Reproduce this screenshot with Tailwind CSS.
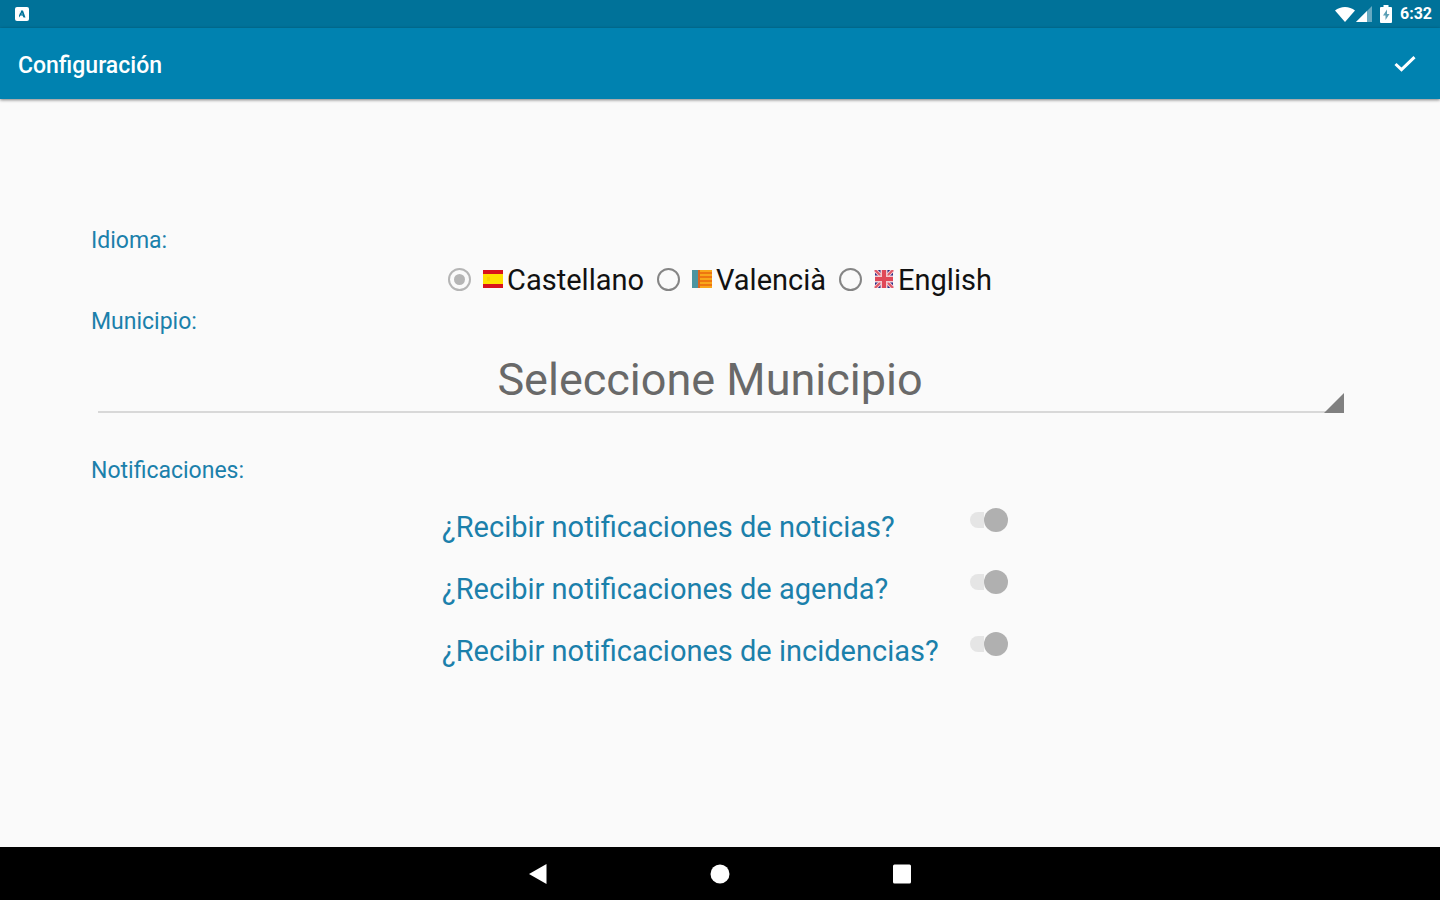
<!DOCTYPE html>
<html lang="es">
<head>
<meta charset="utf-8">
<meta name="viewport" content="width=device-width, initial-scale=1">
<title>Configuración</title>
<script src="https://cdn.jsdelivr.net/npm/@tailwindcss/browser@4"></script>
</head>
<body class="flex min-h-screen flex-col bg-[#fafafa] font-['Roboto',sans-serif] text-[#1b80ab]">
  <!-- Status bar -->
  <div class="flex h-7 items-center justify-between bg-[#007299] pr-2 pl-[15px] text-white">
    <svg class="size-[14px]" viewBox="0 0 14 14" aria-hidden="true"><rect width="14" height="14" rx="2" fill="#fff"/><path d="M4 10.500V8.500L6 3.500h2l2.500 7H8.500L7.500 8.500H5.500Z" fill="#007299"/><path d="M4.500 4h1.500v1.500H4.500zM6.500 6.500h1v1h-1z" fill="#dceef4"/></svg>
    <div class="flex items-center">
      <svg class="h-4 w-5" viewBox="0 0 20 16" aria-hidden="true"><path d="M0 4.500C5.500-.2 14.500-.2 20 4.500L10 16Z" fill="#fff"/></svg>
      <svg class="ml-px h-4 w-4" viewBox="0 0 16 16" aria-hidden="true"><path d="M0 16 16 0V16Z" fill="#66aac2"/><path d="M0 16 11 5V16Z" fill="#fff"/></svg>
      <svg class="ml-2 h-[18px] w-3" viewBox="0 0 12 18" aria-hidden="true"><path d="M3.500 0h5v2H11a1 1 0 0 1 1 1v14a1 1 0 0 1-1 1H1a1 1 0 0 1-1-1V3a1 1 0 0 1 1-1h2.500Z" fill="#fff"/><path d="M7 4.500 3 10.500h2.500V15l4-6H7Z" fill="#5c9fb5"/></svg>
      <span class="ml-2 text-[16px] leading-4 font-bold">6:32</span>
    </div>
  </div>

  <!-- App bar -->
  <header class="flex h-[71px] items-center justify-between bg-[#0082b0] pr-6 pl-[18px] text-white shadow-[0_1px_3px_rgba(0,0,0,0.5)]">
    <h1 class="pt-1 text-[23px] leading-8 font-medium">Configuración</h1>
    <button type="button" aria-label="Guardar" class="pt-px">
      <svg class="h-4 w-[22px]" viewBox="0 0 22 16" fill="none" stroke="#fff" stroke-width="3" aria-hidden="true"><path d="M1.500 8 7.500 13.700 20.500 1.200"/></svg>
    </button>
  </header>

  <main class="flex-1 px-[91px] pt-[126px]">
    <h2 id="idioma" class="text-[23px] leading-8">Idioma:</h2>
    <div role="radiogroup" aria-labelledby="idioma" class="flex h-[49px] items-start justify-center gap-[13px] pt-[5px] text-[29px] leading-9 text-[#111]">
      <label class="flex items-center">
        <input type="radio" name="lang" checked class="mr-3 mb-[2px] grid size-[23px] appearance-none place-items-center rounded-full border-2 border-[#b5b5b5] before:size-[11px] before:rounded-full before:bg-[#b5b5b5]">
        <svg class="mr-1 mb-[2px] h-[18px] w-5" viewBox="0 0 20 18" aria-hidden="true"><path d="M0 0h20v18H0z" fill="#d9121c"/><path d="M0 4h20v10H0z" fill="#ffdf00"/><path d="M4 7h3v4H4z" fill="#fbd000"/></svg>
        Castellano
      </label>
      <label class="flex items-center">
        <input type="radio" name="lang" class="mr-3 mb-[2px] size-[23px] appearance-none rounded-full border-2 border-[#858585]">
        <svg class="mr-1 mb-[2px] h-[18px] w-5" viewBox="0 0 20 18" aria-hidden="true"><path d="M0 0h20v18H0z" fill="#f9a71b"/><path d="M0 0h6v18H0z" fill="#4b94a0"/><path d="M6 0h2v18H6z" fill="#d9661f"/><path d="M8 2h12v2H8zM8 6h12v2H8zM8 10h12v2H8zM8 14h12v2H8z" fill="#ee7610"/></svg>
        Valencià
      </label>
      <label class="flex items-center">
        <input type="radio" name="lang" class="mr-3 mb-[2px] size-[23px] appearance-none rounded-full border-2 border-[#858585]">
        <svg class="mr-1 mb-[2px] h-[18px] w-5" viewBox="0 0 20 18" aria-hidden="true"><path d="M1 0h18v18H1z" fill="#292d87"/><path d="M1 0 19 18M19 0 1 18" stroke="#f4c9d0" stroke-width="4"/><path d="M1 0 19 18M19 0 1 18" stroke="#df5766" stroke-width="2"/><path d="M10 0v18M1 9h18" stroke="#f4c9d0" stroke-width="7"/><path d="M10 0v18M1 9h18" stroke="#e04858" stroke-width="4"/></svg>
        English
      </label>
    </div>

    <h2 class="text-[23px] leading-8"><label for="municipio">Municipio:</label></h2>
    <div class="relative mr-[5px] ml-[7px]">
      <select id="municipio" class="block h-[75px] w-full appearance-none border-b-2 border-[#d8d8d8] pt-2 pr-[22px] text-center text-[45px] text-[#696969] [text-align-last:center]">
        <option>Seleccione Municipio</option>
      </select>
      <svg class="pointer-events-none absolute right-0 bottom-0 size-5" viewBox="0 0 20 20" aria-hidden="true"><path d="M20 0V20H0Z" fill="#808080"/></svg>
    </div>

    <h2 class="mt-[42px] text-[23px] leading-8">Notificaciones:</h2>
    <div class="mx-auto mt-[9px] w-[576px] pl-[10px] text-[29px] leading-[62px]">
      <div class="flex items-start justify-between">
        <label for="noticias">¿Recibir notificaciones de noticias?</label>
        <input id="noticias" type="checkbox" role="switch" checked class="mt-3 flex h-6 w-[38px] appearance-none items-center before:h-4 before:w-[14px] before:rounded-l-full before:bg-[#e5e5e5] after:size-6 after:rounded-full after:bg-[#b0b0b0]">
      </div>
      <div class="flex items-start justify-between">
        <label for="agenda">¿Recibir notificaciones de agenda?</label>
        <input id="agenda" type="checkbox" role="switch" checked class="mt-3 flex h-6 w-[38px] appearance-none items-center before:h-4 before:w-[14px] before:rounded-l-full before:bg-[#e5e5e5] after:size-6 after:rounded-full after:bg-[#b0b0b0]">
      </div>
      <div class="flex items-start justify-between">
        <label for="incidencias">¿Recibir notificaciones de incidencias?</label>
        <input id="incidencias" type="checkbox" role="switch" checked class="mt-3 flex h-6 w-[38px] appearance-none items-center before:h-4 before:w-[14px] before:rounded-l-full before:bg-[#e5e5e5] after:size-6 after:rounded-full after:bg-[#b0b0b0]">
      </div>
    </div>
  </main>

  <!-- System navigation -->
  <nav class="flex h-[53px] items-center justify-center bg-black">
    <button type="button" aria-label="Atrás" class="flex w-[182px] justify-center"><svg class="size-5" viewBox="0 0 20 20" aria-hidden="true"><path d="M1 10 18.500 0V20Z" fill="#fff"/></svg></button>
    <button type="button" aria-label="Inicio" class="flex w-[182px] justify-center"><svg class="size-5" viewBox="0 0 20 20" aria-hidden="true"><circle cx="10" cy="10" r="9.500" fill="#fff"/></svg></button>
    <button type="button" aria-label="Recientes" class="flex w-[182px] justify-center"><svg class="size-5" viewBox="0 0 20 20" aria-hidden="true"><rect x="1" y="0.500" width="18" height="19" rx="1.500" fill="#fff"/></svg></button>
  </nav>
</body>
</html>
